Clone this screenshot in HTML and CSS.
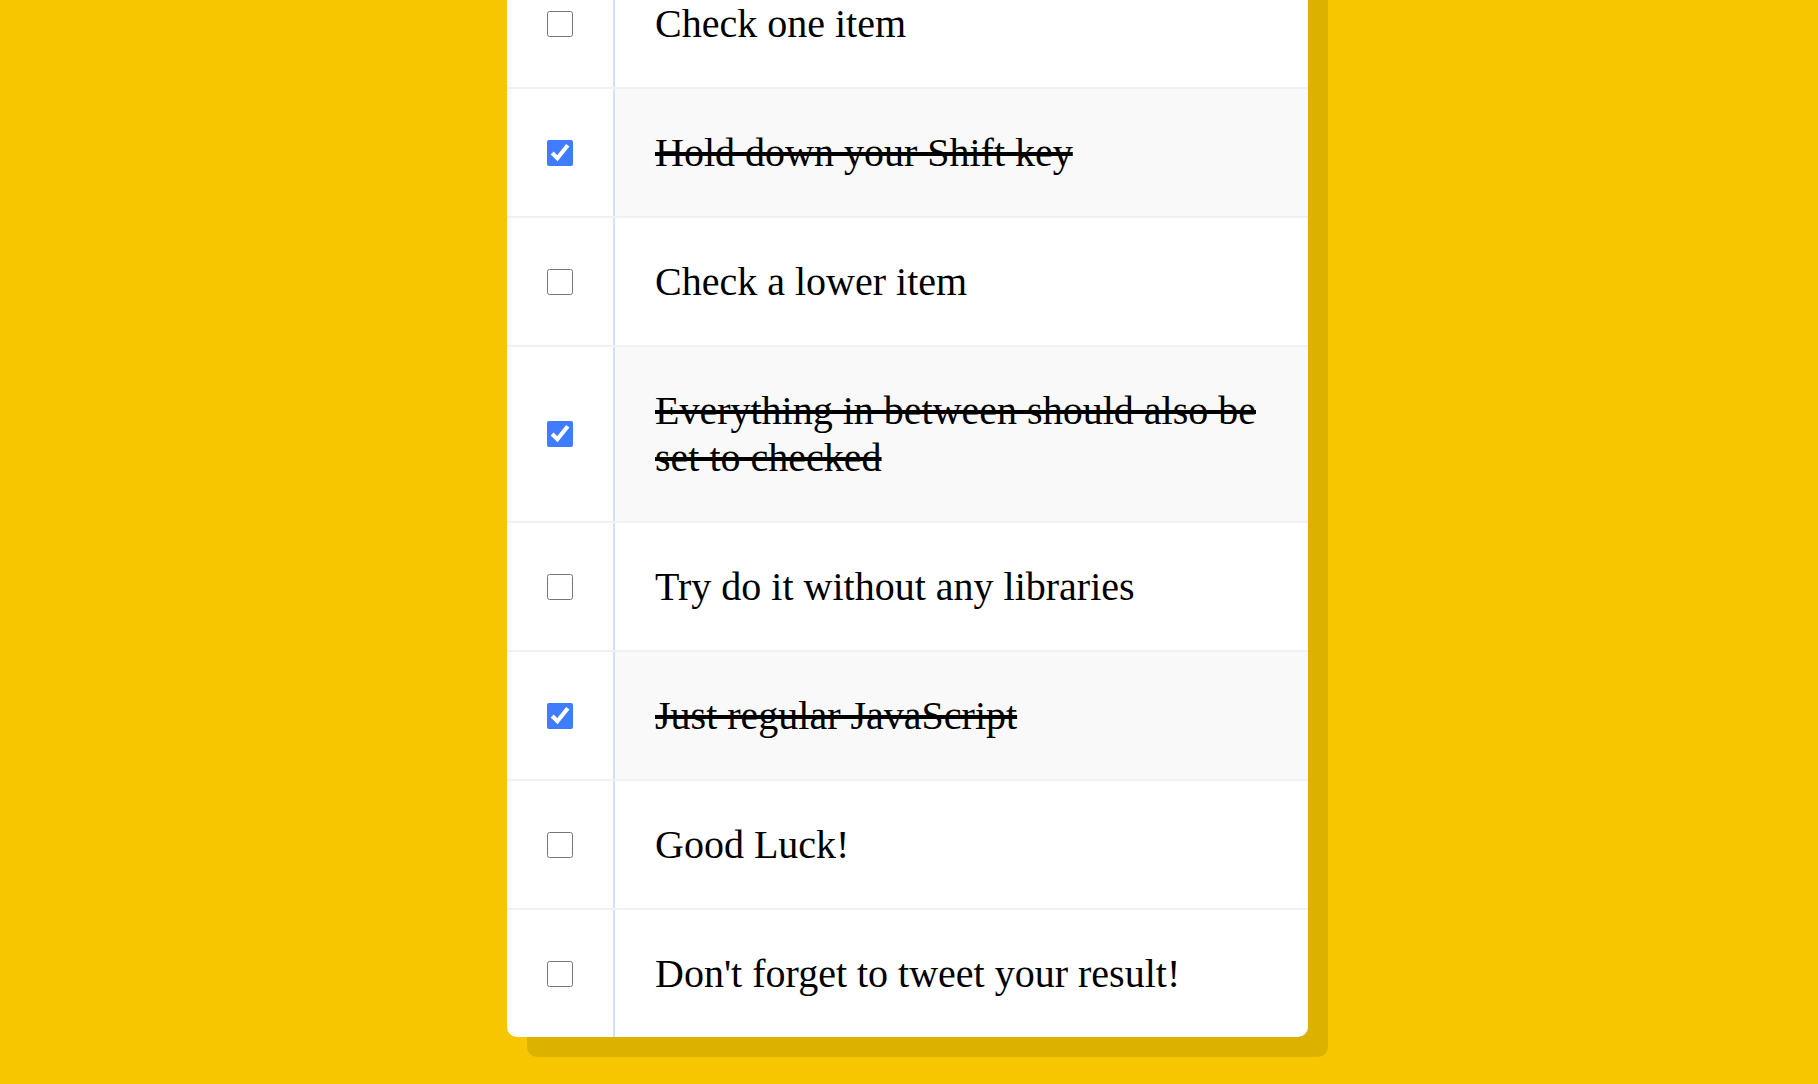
FILE: index.html
```html
<!DOCTYPE html>
<html>
<head>
<meta charset="utf-8">
<title>Hold Shift to Check Multiple Checkboxes</title>
<link rel="stylesheet" href="styles.css">
</head>
<body>
<div class="page">
  <div class="inbox">
    <div class="item">
      <input type="checkbox">
      <p>Check one item</p>
    </div>
    <div class="item">
      <input type="checkbox" checked>
      <p>Hold down your Shift key</p>
    </div>
    <div class="item">
      <input type="checkbox">
      <p>Check a lower item</p>
    </div>
    <div class="item">
      <input type="checkbox" checked>
      <p>Everything in between should also be set to checked</p>
    </div>
    <div class="item">
      <input type="checkbox">
      <p>Try do it without any libraries</p>
    </div>
    <div class="item">
      <input type="checkbox" checked>
      <p>Just regular JavaScript</p>
    </div>
    <div class="item">
      <input type="checkbox">
      <p>Good Luck!</p>
    </div>
    <div class="item">
      <input type="checkbox">
      <p>Don't forget to tweet your result!</p>
    </div>
  </div>
</div>
</body>
</html>
```
FILE: styles.css
```css
html {
  background: #f7c600;
}
body {
  margin: 0;
  font-family: "Liberation Serif", "Times New Roman", serif;
  overflow: hidden;
  height: 1084px;
}
.page {
  padding-right: 3px;
}
.inbox {
  width: 801px;
  margin: -40px auto 0;
  background: #ffffff;
  border-radius: 10px;
  box-shadow: 20px 20px 0 rgba(0, 0, 0, 0.1);
}
.item {
  display: flex;
  align-items: center;
  border-bottom: 2px solid #f1f1f1;
}
.item:last-child {
  border-bottom: 0;
}
.item input[type="checkbox"] {
  width: 26px;
  height: 26px;
  margin: 40px;
  flex: none;
  accent-color: #3f7cff;
}
.item p {
  margin: 0;
  padding: 40px;
  flex: 1;
  font-size: 40px;
  line-height: 47px;
  color: #000;
  border-left: 2px solid #d1e2ff;
}
.item input:checked + p {
  background: #f9f9f9;
  text-decoration: line-through;
  text-decoration-thickness: 4px;
}
```
